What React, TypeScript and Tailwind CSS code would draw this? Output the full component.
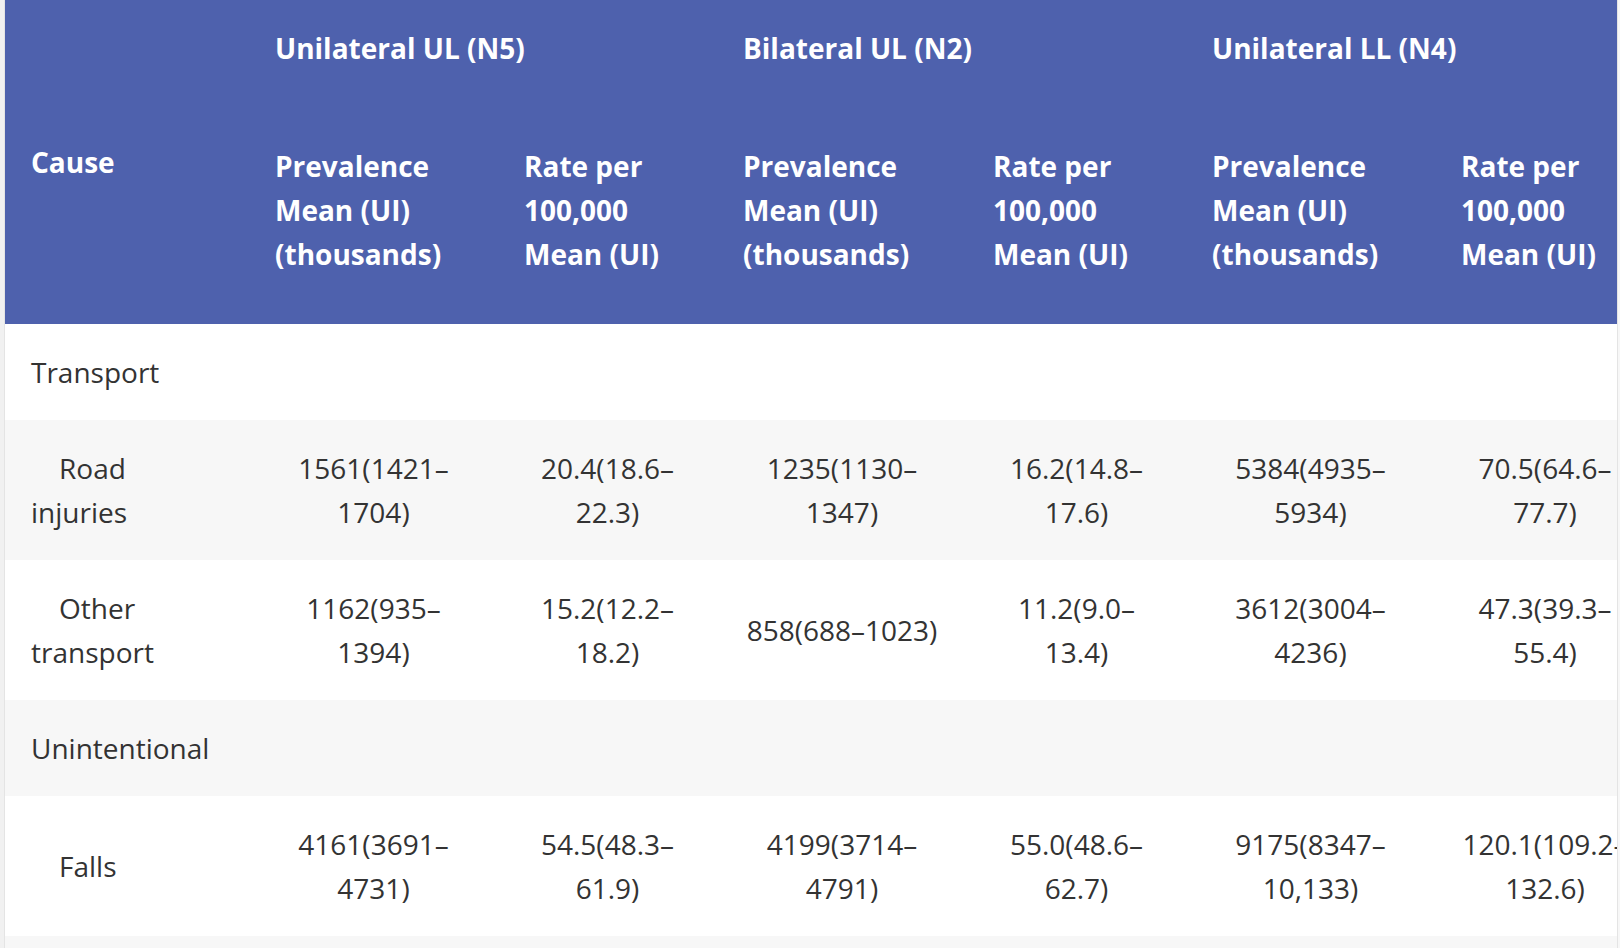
import React from "react";

type Row = { label: string; section?: boolean; cells?: string[] };

const rows: Row[] = [
  { label: "Transport", section: true },
  {
    label: "Road injuries",
    cells: ["1561(1421–1704)", "20.4(18.6–22.3)", "1235(1130–1347)", "16.2(14.8–17.6)", "5384(4935–5934)", "70.5(64.6–77.7)"],
  },
  {
    label: "Other transport",
    cells: ["1162(935–1394)", "15.2(12.2–18.2)", "858(688–1023)", "11.2(9.0–13.4)", "3612(3004–4236)", "47.3(39.3–55.4)"],
  },
  { label: "Unintentional", section: true },
  {
    label: "Falls",
    cells: ["4161(3691–4731)", "54.5(48.3–61.9)", "4199(3714–4791)", "55.0(48.6–62.7)", "9175(8347–10,133)", "120.1(109.2–132.6)"],
  },
  { label: "", section: true },
];

const groups = ["Unilateral UL (N5)", "Bilateral UL (N2)", "Unilateral LL (N4)"];

export default function App() {
  return (
    <div
      className="flex h-[948px] w-[1620px] overflow-hidden bg-white text-[#333333]"
      style={{ fontFamily: '"Open Sans", "Noto Sans", sans-serif' }}
    >
      <div className="w-[5px] shrink-0 border-r border-[#e4e4e4] bg-[#f1f1f1]" />
      <div className="w-[1612px] shrink-0 overflow-hidden">
        <table className="w-[1650px] table-fixed border-collapse text-[28px] leading-[44px]">
          <colgroup>
            <col className="w-[244px]" />
            <col className="w-[249px]" />
            <col className="w-[219px]" />
            <col className="w-[250px]" />
            <col className="w-[219px]" />
            <col className="w-[249px]" />
            <col className="w-[220px]" />
          </colgroup>
          <thead className="bg-[#4e61ad] text-white">
            <tr>
              <th rowSpan={2} className="px-[26px] py-[26px] text-left align-middle font-bold">
                Cause
              </th>
              {groups.map((g) => (
                <th key={g} colSpan={2} className="px-[26px] py-[26px] text-left align-middle font-bold whitespace-nowrap">
                  {g}
                </th>
              ))}
            </tr>
            <tr>
              {groups.map((g) => (
                <React.Fragment key={g}>
                  <th className="px-[26px] pt-[48px] pb-[48px] text-left align-middle font-bold">
                    Prevalence Mean (UI) (thousands)
                  </th>
                  <th className="px-[26px] pt-[48px] pb-[48px] text-left align-middle font-bold">
                    Rate per 100,000 Mean (UI)
                  </th>
                </React.Fragment>
              ))}
            </tr>
          </thead>
          <tbody>
            {rows.map((r, i) => (
              <tr key={i} className={i % 2 === 0 ? "bg-white" : "bg-[#f7f7f7]"}>
                {r.section ? (
                  <>
                    <td className="px-[26px] py-[26px] align-middle whitespace-nowrap">{r.label || "\u00a0"}</td>
                    <td colSpan={6} className="py-[26px]" />
                  </>
                ) : (
                  <>
                    <td className="px-[26px] py-[26px] align-middle indent-7">{r.label}</td>
                    {r.cells!.map((c, j) => (
                      <td key={j} className="px-[26px] py-[26px] text-center align-middle">
                        {c}
                      </td>
                    ))}
                  </>
                )}
              </tr>
            ))}
          </tbody>
        </table>
      </div>
      <div className="flex-1 border-l border-[#e4e4e4] bg-[#f7f7f7]" />
    </div>
  );
}
